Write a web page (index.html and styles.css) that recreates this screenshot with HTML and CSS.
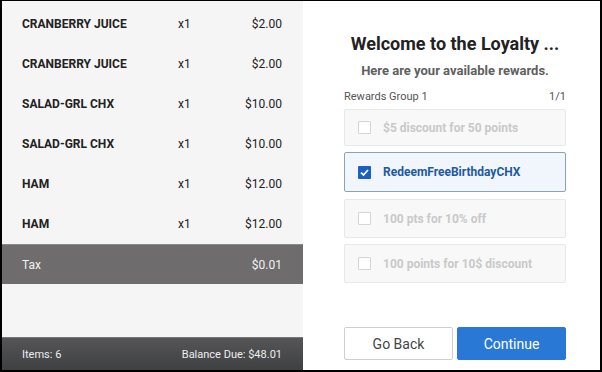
FILE: index.html
```html
<!DOCTYPE html>
<html lang="en">
<head>
    <meta charset="UTF-8">
    <title>Loyalty Rewards</title>
    <link rel="stylesheet" href="styles.css">
</head>
<body>
    <div class="frame">
        <div class="order">
            <div class="items">
                <div class="row"><span class="name">CRANBERRY JUICE</span><span class="qty">x1</span><span class="price">$2.00</span></div>
                <div class="row"><span class="name">CRANBERRY JUICE</span><span class="qty">x1</span><span class="price">$2.00</span></div>
                <div class="row"><span class="name">SALAD-GRL CHX</span><span class="qty">x1</span><span class="price">$10.00</span></div>
                <div class="row"><span class="name">SALAD-GRL CHX</span><span class="qty">x1</span><span class="price">$10.00</span></div>
                <div class="row"><span class="name">HAM</span><span class="qty">x1</span><span class="price">$12.00</span></div>
                <div class="row"><span class="name">HAM</span><span class="qty">x1</span><span class="price">$12.00</span></div>
            </div>
            <div class="tax"><span>Tax</span><span>$0.01</span></div>
            <div class="spacer"></div>
            <div class="footer"><span>Items: 6</span><span>Balance Due: $48.01</span></div>
        </div>

        <div class="loyalty">
            <h1>Welcome to the Loyalty ...</h1>
            <p class="sub">Here are your available rewards.</p>
            <div class="group-head"><span>Rewards Group 1</span><span>1/1</span></div>

            <div class="reward disabled"><span class="box"></span>$5 discount for 50 points</div>
            <div class="reward selected">
                <span class="box checked">
                    <svg width="13" height="13" viewBox="0 0 13 13"><path d="M3 6.6 L5.5 9 L10 4" fill="none" stroke="#fff" stroke-width="1.8"/></svg>
                </span>RedeemFreeBirthdayCHX
            </div>
            <div class="reward disabled"><span class="box"></span>100 pts for 10% off</div>
            <div class="reward disabled"><span class="box"></span>100 points for 10$ discount</div>

            <div class="actions">
                <button class="back">Go Back</button>
                <button class="continue">Continue</button>
            </div>
        </div>
    </div>
</body>
</html>
```

FILE: styles.css
```css
body {
    margin: 0;
    background-color: #000;
    font-family: Roboto, "Liberation Sans", Arial, sans-serif;
}

.frame {
    display: flex;
    width: 598px;
    height: 369px;
    margin: 1px 2px 2px 2px;
    background-color: #fff;
}

/* left: order list */
.order {
    width: 301px;
    display: flex;
    flex-direction: column;
    background-color: #f5f5f5;
}

.items {
    padding-top: 3px;
}

.row {
    display: flex;
    align-items: center;
    height: 40px;
    padding: 0 21px 0 20px;
    font-size: 12px;
    color: #222;
}

.name {
    width: 156px;
    font-weight: bold;
}

.qty {
    flex: 1;
}

.price {
    text-align: right;
}

.tax {
    display: flex;
    justify-content: space-between;
    align-items: center;
    height: 39px;
    padding: 0 21px 0 20px;
    background-color: #6e6c6c;
    border-top: 1px solid #8a8888;
    color: #f2f2f2;
    font-size: 12px;
}

.spacer {
    flex: 1;
}

.footer {
    display: flex;
    justify-content: space-between;
    align-items: center;
    height: 32px;
    padding: 0 21px 0 20px;
    background: linear-gradient(#555557, #3f4042);
    border-top: 1px solid #777;
    color: #eee;
    font-size: 11px;
}

/* right: loyalty rewards */
.loyalty {
    flex: 1;
    display: flex;
    flex-direction: column;
    padding: 0 34px 0 41px;
}

h1 {
    margin: 32px 0 0 0;
    font-size: 18px;
    text-align: center;
    color: #222;
}

.sub {
    margin: 9px 0 0 0;
    font-size: 13px;
    font-weight: bold;
    text-align: center;
    color: #606060;
}

.group-head {
    display: flex;
    justify-content: space-between;
    margin-top: 12px;
    font-size: 11px;
    color: #555;
}

.reward {
    display: flex;
    align-items: center;
    height: 37px;
    margin-top: 6px;
    padding-left: 13px;
    border: 1px solid #e8e8e8;
    border-radius: 2px;
    background-color: #f8f8f8;
    font-size: 12px;
    font-weight: bold;
}

.group-head + .reward {
    margin-top: 6px;
    height: 35px;
}

.reward.disabled {
    color: #c9c9c9;
}

.reward.selected {
    height: 38px;
    margin-top: 6px;
    margin-bottom: 1px;
    border-color: #8aa3bb;
    background-color: #f0f6fc;
    color: #1f5a9e;
}

.box {
    width: 11px;
    height: 11px;
    margin-right: 12px;
    border: 1px solid #d5d5d5;
    border-radius: 1px;
    background-color: #fff;
}

.box.checked {
    width: 13px;
    height: 13px;
    border: none;
    background-color: #1a5fc4;
}

.box svg {
    display: block;
}

.actions {
    display: flex;
    gap: 4px;
    margin-top: auto;
    margin-bottom: 10px;
}

.actions button {
    flex: 1;
    height: 33px;
    border-radius: 2px;
    font-family: Roboto, "Liberation Sans", Arial, sans-serif;
    font-size: 14px;
    cursor: pointer;
}

.back {
    background-color: #fff;
    border: 1px solid #cfcfcf;
    color: #444;
}

.continue {
    background-color: #2a78d6;
    border: 1px solid #2a78d6;
    color: #fff;
}
```
